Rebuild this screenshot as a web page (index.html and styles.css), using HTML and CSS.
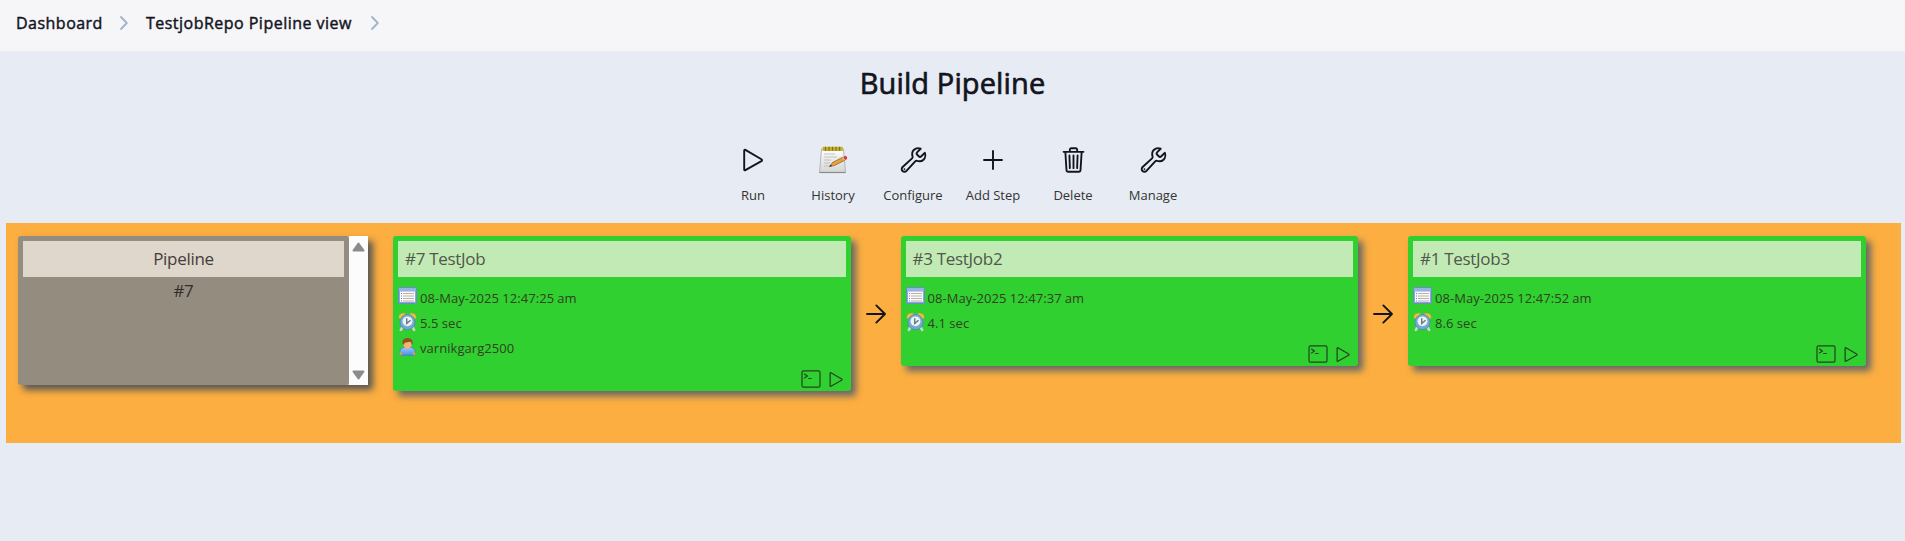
FILE: index.html
```
<!DOCTYPE html>
<html lang="en">
<head>
<meta charset="utf-8">
<title>Build Pipeline</title>
<link rel="stylesheet" href="styles.css">
</head>
<body>
<svg class="defs" width="0" height="0">
  <defs>
    <linearGradient id="paper" x1="0" y1="0" x2="0" y2="1"><stop offset="0" stop-color="#fff"/><stop offset="1" stop-color="#d4d4d4"/></linearGradient>
    <linearGradient id="shirt" x1="0" y1="0" x2="0" y2="1"><stop offset="0" stop-color="#9cc4fa"/><stop offset="1" stop-color="#4a90ea"/></linearGradient>
    <symbol id="chevron" viewBox="0 0 10 16"><path d="M2 2l5.8 6L2 14" fill="none" stroke="#9fb3cd" stroke-width="1.8" stroke-linecap="round" stroke-linejoin="round"/></symbol>
    <symbol id="play" viewBox="0 0 24 24"><path d="M3.2 2.6v18.8q0 1.3 1.2.7l16-9q1.300-.9 0-1.800l-16-9.400q-1.200-.6-1.200.7z" fill="none" stroke="currentColor" stroke-width="1.9" stroke-linejoin="round"/></symbol>
    <symbol id="wrench" viewBox="0 0 512 512"><path d="M393.870 190a32.100 32.100 0 01-45.250 0l-26.570-26.570a32.090 32.090 0 010-45.260L382.190 58a1 1 0 00-.3-1.640c-38.820-16.640-89.150-8.160-121.110 23.570-30.580 30.350-32.320 76-21.120 115.840a31.930 31.930 0 01-9.060 32.080L64 380a48.170 48.170 0 1068 68l153.860-167a31.930 31.930 0 0131.600-9.130c39.540 10.590 84.540 8.600 114.720-21.190 32.490-32 39.500-88.560 23.750-120.930a1 1 0 00-1.600-.26z" fill="none" stroke="currentColor" stroke-width="34" stroke-linecap="round" stroke-linejoin="round"/><circle cx="96" cy="416" r="16" fill="currentColor"/></symbol>
    <symbol id="trash" viewBox="0 0 512 512"><path d="M112 112l20 320c.95 18.490 14.400 32 32 32h184c17.670 0 30.870-13.510 32-32l20-320M80 112h352M192 112V72a23.930 23.930 0 0124-24h80a23.930 23.930 0 0124 24v40M256 176v224M184 176l8 224M328 176l-8 224" fill="none" stroke="currentColor" stroke-width="33" stroke-linecap="round" stroke-linejoin="round"/></symbol>
    <symbol id="plus" viewBox="0 0 24 24"><path d="M12 3v18M3 12h18" stroke="currentColor" stroke-width="1.900" stroke-linecap="round"/></symbol>
    <symbol id="arrow" viewBox="0 0 22 20"><path d="M2 10h18M11.300 1.400L20 10l-8.700 8.600" fill="none" stroke="#14141f" stroke-width="1.900" stroke-linecap="round" stroke-linejoin="round"/></symbol>
    <symbol id="console" viewBox="0 0 20 18"><rect x="1" y=".8" width="18" height="16.400" rx="1.600" fill="none" stroke="currentColor" stroke-width="1.200"/><path d="M3.200 3.700l3.200 2.300-3.200 2.300M7.200 8.500h3.400" fill="none" stroke="currentColor" stroke-width="1.200"/></symbol>
    <symbol id="notepad" viewBox="0 0 30 28">
      <path d="M3.500 3h22l2 23.500h-26z" fill="url(#paper)" stroke="#b5b5b5"/>
      <path d="M1.500 26.500h26" stroke="#8a8a8a" stroke-width="1.200"/>
      <path d="M4.500.8h20.300v4.200H4.500z" fill="#c4b12e"/>
      <path d="M7.500.8v4M11 .8v4M14.500 .8v4M18 .8v4M21.500 .8v4" stroke="#81741c" stroke-width="1.200"/>
      <path d="M6 8h11M6 11h13M6 14h7M6 17h6M6 20h5" stroke="#b9bcc0" stroke-width=".9"/>
      <path d="M11.500 20.500l3-4L25 11l2 3.200-10.500 5.300z" fill="#e5a13b" stroke="#8d5a1c" stroke-width=".7"/>
      <path d="M25 11l2-1q1.500-.2 2 1t-.4 2.200L27 14.200z" fill="#e5342e"/>
      <path d="M24 11.500l1.200-.7 2 3.300-1.200.6z" fill="#b9c0c5"/>
      <path d="M11.300 20.700l1.500-2 1.200 1.400z" fill="#222"/>
    </symbol>
    <symbol id="list" viewBox="0 0 19 17">
      <rect x=".5" y=".5" width="18" height="16" rx="1" fill="#85a8dd" stroke="#6c8cc4"/>
      <path d="M1 1h17v3H1z" fill="#94b4e3"/>
      <path d="M2 4.500h15V15H2z" fill="#fafafa"/>
      <path d="M5 6.500h11M5 9h11M5 11.500h11M5 14h11" stroke="#b4a79f" stroke-width=".9"/>
      <path d="M3 6.500h1M3 9h1M3 11.500h1M3 14h1" stroke="#6087c8"/>
    </symbol>
    <symbol id="clock" viewBox="0 0 20 20">
      <path d="M5 15l-2 3.300M15 15l2 3.300" stroke="#cfd3cf" stroke-width="2.800" stroke-linecap="round"/>
      <path d="M.8 5.500Q.6 1 6 .6l3 1L2.500 7zM19.200 5.500Q19.400 1 14 .6l-3 1L17.500 7z" fill="#e9c437" stroke="#c49b20" stroke-width=".5"/>
      <circle cx="10" cy="10" r="8" fill="#74a8d8" stroke="#4f83b5" stroke-width=".8"/>
      <circle cx="10" cy="9.300" r="5.200" fill="#edf4f5"/>
      <path d="M9.200 6v5.500l4-3.300" fill="none" stroke="#667a78" stroke-width="1.500"/>
    </symbol>
    <symbol id="user" viewBox="0 0 20 20">
      <path d="M1.500 17q.5-5.500 4.500-6.500h8q4 1 4.500 6.500-1 2-3 1.700h-11q-2 .3-3-1.700z" fill="url(#shirt)" stroke="#3974bf" stroke-width=".6"/>
      <circle cx="3" cy="17" r="1.500" fill="#e59a54"/><circle cx="17" cy="17" r="1.500" fill="#e59a54"/>
      <ellipse cx="10" cy="7" rx="4.500" ry="4.800" fill="#f1b675"/>
      <path d="M4.700 6.500Q4 .8 10 .5q6 .3 5.300 6l-1 1.500q0-3-1.500-3.500L7 5.500 6 8z" fill="#96501c"/>
    </symbol>
  </defs>
</svg>

<header class="breadcrumbs">
  <a class="crumb crumb-home">Dashboard</a>
  <svg class="chevron"><use href="#chevron"/></svg>
  <a class="crumb crumb-view">TestjobRepo Pipeline view</a>
  <svg class="chevron"><use href="#chevron"/></svg>
</header>

<main>
  <h1 class="title">Build Pipeline</h1>
  <nav class="toolbar">
    <a class="tool"><svg class="tool-icon"><use href="#play"/></svg><span>Run</span></a>
    <a class="tool"><svg class="tool-icon notepad"><use href="#notepad"/></svg><span>History</span></a>
    <a class="tool"><svg class="tool-icon wrench"><use href="#wrench"/></svg><span>Configure</span></a>
    <a class="tool"><svg class="tool-icon"><use href="#plus"/></svg><span>Add Step</span></a>
    <a class="tool"><svg class="tool-icon trash"><use href="#trash"/></svg><span>Delete</span></a>
    <a class="tool"><svg class="tool-icon wrench"><use href="#wrench"/></svg><span>Manage</span></a>
  </nav>

  <section class="pipeline">
    <div class="revision">
      <div class="revision-body">
        <div class="card-head revision-head">Pipeline</div>
        <div class="revision-number">#7</div>
      </div>
      <div class="scrollbar">
        <svg width="13" height="10"><path d="M6.500 1.500L11.500 8.500h-10z" fill="#8b8b8b" stroke="#8b8b8b" stroke-width="2" stroke-linejoin="round"/></svg>
        <svg width="13" height="10"><path d="M6.500 8.500L11.500 1.500h-10z" fill="#8b8b8b" stroke="#8b8b8b" stroke-width="2" stroke-linejoin="round"/></svg>
      </div>
    </div>

    <article class="build build-tall">
      <div class="card-head">#7 TestJob</div>
      <ul class="facts">
        <li><svg class="fact-icon list"><use href="#list"/></svg><span>08-May-2025 12:47:25<span class="meridiem">am</span></span></li>
        <li><svg class="fact-icon"><use href="#clock"/></svg><span>5.5 sec</span></li>
        <li><svg class="fact-icon"><use href="#user"/></svg><span>varnikgarg2500</span></li>
      </ul>
      <div class="actions"><svg class="console"><use href="#console"/></svg><svg class="rerun"><use href="#play"/></svg></div>
    </article>
    <svg class="arrow"><use href="#arrow"/></svg>
    <article class="build">
      <div class="card-head">#3 TestJob2</div>
      <ul class="facts">
        <li><svg class="fact-icon list"><use href="#list"/></svg><span>08-May-2025 12:47:37<span class="meridiem">am</span></span></li>
        <li><svg class="fact-icon"><use href="#clock"/></svg><span>4.1 sec</span></li>
      </ul>
      <div class="actions"><svg class="console"><use href="#console"/></svg><svg class="rerun"><use href="#play"/></svg></div>
    </article>
    <svg class="arrow"><use href="#arrow"/></svg>
    <article class="build">
      <div class="card-head">#1 TestJob3</div>
      <ul class="facts">
        <li><svg class="fact-icon list"><use href="#list"/></svg><span>08-May-2025 12:47:52<span class="meridiem">am</span></span></li>
        <li><svg class="fact-icon"><use href="#clock"/></svg><span>8.6 sec</span></li>
      </ul>
      <div class="actions"><svg class="console"><use href="#console"/></svg><svg class="rerun"><use href="#play"/></svg></div>
    </article>
  </section>
</main>
</body>
</html>
```
FILE: styles.css
```
* { box-sizing: border-box; }
html { height: 100%; overflow: hidden; }
body {
  margin: 0;
  height: 100%;
  background: #e7ecf4;
  color: #14141f;
  font-family: "Open Sans", "Noto Sans", sans-serif;
}
.defs { display: block; height: 0; }
svg { flex: none; }

.breadcrumbs {
  display: flex;
  align-items: center;
  height: 51px;
  padding: 0 0 5px 16px;
  background: #f6f6f8;
}
.crumb {
  font-size: 16px;
  letter-spacing: .48px;
  white-space: nowrap;
  -webkit-text-stroke: .45px #14141f;
}
.crumb-home { width: 87px; }
.crumb-view { width: 209px; }
.chevron { width: 10px; height: 16px; margin: 0 17px 0 16px; }
.crumb-view + .chevron { margin-left: 15px; }

.title {
  margin: 0;
  padding-top: 10px;
  height: 88px;
  font-size: 29px;
  line-height: 44px;
  font-weight: 400;
  letter-spacing: .12px;
  text-align: center;
  -webkit-text-stroke: .7px #14141f;
}
.toolbar {
  display: flex;
  justify-content: center;
  height: 84px;
  padding: 6px 0 0 1px;
}
.tool {
  display: flex;
  flex-direction: column;
  align-items: center;
  width: 80px;
  font-size: 13px;
  line-height: 18px;
  color: #333;
}
.tool-icon { width: 24px; height: 30px; margin-bottom: 11px; color: #14141f; }
.notepad { width: 30px; }
.wrench, .trash { width: 29px; }

.pipeline {
  display: flex;
  align-items: flex-start;
  width: 1895px;
  height: 220px;
  margin-left: 6px;
  padding: 13px 12px;
  background: #fcae40;
}
.revision {
  display: flex;
  width: 350px;
  height: 149px;
  margin-right: 25px;
  border-radius: 3px 0 0 3px;
  box-shadow: 5px 5px 7px #555;
}
.revision-body {
  width: 331px;
  padding: 5px;
  border-radius: 3px;
  background: #958c80;
  color: #332c2b;
  font-size: 17px;
  text-align: center;
}
.card-head {
  height: 36px;
  padding: 0 7px;
  font-size: 17px;
  line-height: 36px;
  letter-spacing: -.3px;
  background: #c2eab5;
  color: #51574a;
}
.revision-head { background: #dfd6cc; color: #453d3b; }
.revision-number { line-height: 27px; letter-spacing: -.3px; }
.scrollbar {
  display: flex;
  flex-direction: column;
  align-items: center;
  justify-content: space-between;
  width: 19px;
  padding: 6px 0 5px;
  background: #fcfcfc;
}

.build {
  display: flex;
  flex-direction: column;
  width: 457.500px;
  height: 130px;
  padding: 5px 5px 3px;
  border-radius: 3px;
  background: #31d031;
  box-shadow: 5px 5px 7px #666;
}
.build-tall { height: 155px; }
.facts { margin: 8px 0 0; padding: 0; list-style: none; }
.facts li {
  display: flex;
  align-items: center;
  gap: 3px;
  height: 25px;
  font-size: 13px;
  letter-spacing: .05px;
  color: #304020;
}
.fact-icon { width: 19px; height: 20px; margin-bottom: 2px; }
.list { height: 17px; margin-bottom: 4px; }
.meridiem { margin-left: 3px; }
.actions {
  display: flex;
  align-items: center;
  justify-content: flex-end;
  gap: 7px;
  margin-top: auto;
  padding-right: 2px;
  color: #234420;
}
.console { width: 20px; height: 18px; }
.rerun { width: 16px; height: 17px; }
.arrow { width: 22px; height: 20px; margin: 68px 14px 0; }
```
